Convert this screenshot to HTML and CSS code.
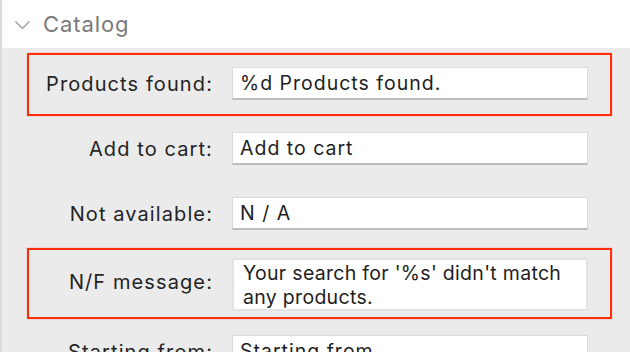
FILE: index.html
```html
<!DOCTYPE html>
<html>
<head>
    <title>Catalog strings</title>
    <link rel="stylesheet" href="styles.css">
</head>
<body>
<div class="panel">
    <div class="section-head">
        <svg class="chevron" width="17" height="10" viewBox="0 0 17 10">
            <path d="M1.5 1.5 L8.5 8.3 L15.5 1.5" fill="none" stroke="#a9a9a9" stroke-width="1.6"/>
        </svg>
        <span class="section-title">Catalog</span>
    </div>

    <div class="fields">
        <div class="row marked">
            <label class="label">Products found:</label>
            <input class="field" type="text" value="%d Products found.">
        </div>
        <div class="row">
            <label class="label">Add to cart:</label>
            <input class="field" type="text" value="Add to cart">
        </div>
        <div class="row">
            <label class="label">Not available:</label>
            <input class="field" type="text" value="N / A">
        </div>
        <div class="row marked tall">
            <label class="label">N/F message:</label>
            <textarea class="field area" rows="2">Your search for '%s' didn't match any products.</textarea>
        </div>
        <div class="row">
            <label class="label">Starting from:</label>
            <input class="field" type="text" value="Starting from">
        </div>
    </div>
</div>
</body>
</html>
```

FILE: styles.css
```css
html, body {
    margin: 0;
    padding: 0;
    height: 352px;
    overflow: hidden;
}
body {
    font-family: Inter, "Noto Sans", sans-serif;
    background: #ebebeb;
    color: #242424;
}
.panel {
    border-left: 2px solid #dcdcdc;
    min-height: 352px;
}
.section-head {
    height: 48px;
    background: #ffffff;
    display: flex;
    align-items: center;
    padding-left: 12px;
    box-sizing: border-box;
}
.chevron {
    margin-top: 2px;
}
.section-title {
    margin-left: 12px;
    font-size: 22px;
    letter-spacing: 0.9px;
    color: #7a7a7a;
    padding-bottom: 1px;
}
.fields {
    padding: 5px 18px 0 25px;
}
.row {
    display: grid;
    grid-template-columns: 184px 356px;
    column-gap: 19px;
    align-items: center;
    padding: 12px 0 14px;
    margin-bottom: 2px;
    border: 2px solid transparent;
}
.row.tall {
    padding: 8px 0 6px;
    align-items: start;
}
.row.tall .label {
    margin-top: 12px;
}
.marked {
    border-color: #ff2d0a;
    box-shadow: 0 0 1px rgba(255, 45, 10, 0.6);
}
.label {
    text-align: right;
    font-size: 20px;
    letter-spacing: 1.1px;
    color: #242424;
}
.field {
    box-sizing: border-box;
    width: 356px;
    height: 33px;
    margin: 0;
    padding: 0 7px;
    font-family: Inter, "Noto Sans", sans-serif;
    font-size: 19.5px;
    letter-spacing: 1px;
    color: #1e1e1e;
    background: #ffffff;
    border: 1px solid #dadada;
    border-bottom: 2px solid #bdbdbd;
    border-radius: 0;
    outline: none;
}
.area {
    height: 53px;
    padding: 1px 9px;
    line-height: 24px;
    letter-spacing: 0.3px;
    border: 2px solid #e3e3e3;
    resize: none;
    overflow: hidden;
}
```
